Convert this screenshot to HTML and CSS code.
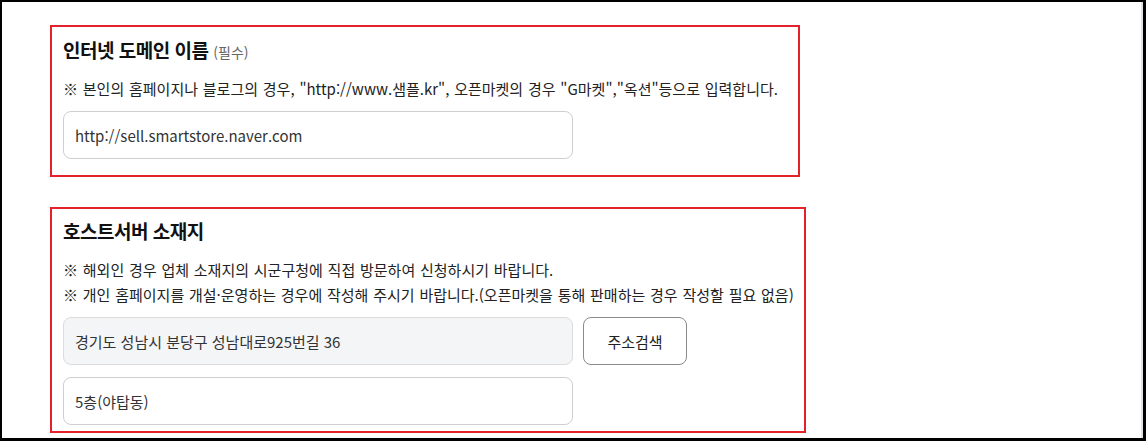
FILE: index.html
```html
<!DOCTYPE html>
<html lang="ko">
<head>
<meta charset="utf-8">
<title>판매자 정보</title>
<link rel="stylesheet" href="styles.css">
</head>
<body>
<div class="frame">
  <div class="page">
    <section class="field field-domain">
      <h2 class="field-title">인터넷 도메인 이름 <span class="req">(필수)</span></h2>
      <p class="note">※ 본인의 홈페이지나 블로그의 경우, "http://www.샘플.kr", 오픈마켓의 경우 "G마켓","옥션"등으로 입력합니다.</p>
      <div class="row">
        <input class="text-input" type="text" value="http://sell.smartstore.naver.com" readonly>
      </div>
    </section>

    <section class="field field-host">
      <h2 class="field-title">호스트서버 소재지</h2>
      <p class="note">※ 해외인 경우 업체 소재지의 시군구청에 직접 방문하여 신청하시기 바랍니다.<br>※ 개인 홈페이지를 개설·운영하는 경우에 작성해 주시기 바랍니다.(오픈마켓을 통해 판매하는 경우 작성할 필요 없음)</p>
      <div class="row">
        <input class="text-input is-disabled" type="text" value="경기도 성남시 분당구 성남대로925번길 36" readonly>
        <button class="btn" type="button">주소검색</button>
      </div>
      <div class="row row-detail">
        <input class="text-input" type="text" value="5층(야탑동)" readonly>
      </div>
    </section>
  </div>
</div>
</body>
</html>
```

FILE: styles.css
```css
* {
  box-sizing: border-box;
}

html, body {
  margin: 0;
  padding: 0;
  background: #ffffff;
}

body {
  font-family: "Noto Sans CJK KR", "Noto Sans", sans-serif;
  color: #222;
}

.frame {
  width: 1146px;
  height: 441px;
  border: 2px solid #000;
  border-right-width: 3px;
  border-bottom-width: 3px;
  overflow: hidden;
}

.page {
  height: 100%;
  padding: 23px 0 0 48px;
  border-right: 2px solid #dfe2e7;
  display: flex;
  flex-direction: column;
  gap: 30px;
}

.field {
  border: 2px solid #e5222b;
  padding: 9px 11px 16px;
}

.field-domain {
  width: 750px;
}

.field-host {
  width: 756px;
  padding-top: 8px;
  padding-bottom: 6px;
}

.field-title {
  margin: 0;
  height: 28px;
  font-size: 19px;
  line-height: 28px;
  font-weight: 700;
  color: #111;
  letter-spacing: -0.5px;
}

.req {
  font-size: 14px;
  line-height: 1;
  font-weight: 400;
  color: #666;
  letter-spacing: 0;
}

.note {
  margin: 12px 0 0;
  font-size: 15px;
  line-height: 25px;
  color: #222;
  letter-spacing: 0;
  word-spacing: 0.6px;
  white-space: nowrap;
}

.row {
  display: flex;
  gap: 10px;
  margin-top: 10px;
}

.row-detail {
  margin-top: 12px;
}

.text-input {
  width: 510px;
  height: 48px;
  border: 1px solid #cfcfcf;
  border-radius: 8px;
  padding: 0 11px;
  font-family: "Noto Sans CJK KR", "Noto Sans", sans-serif;
  font-size: 15px;
  color: #333;
  background: #fff;
  outline: none;
}

.text-input.is-disabled {
  background: #f4f5f7;
  border-color: #dcdcdc;
}

.btn {
  width: 104px;
  height: 48px;
  border: 1px solid #8a8a8a;
  border-radius: 8px;
  background: #fff;
  font-family: "Noto Sans CJK KR", "Noto Sans", sans-serif;
  font-size: 15px;
  color: #222;
  padding: 0;
}
```
